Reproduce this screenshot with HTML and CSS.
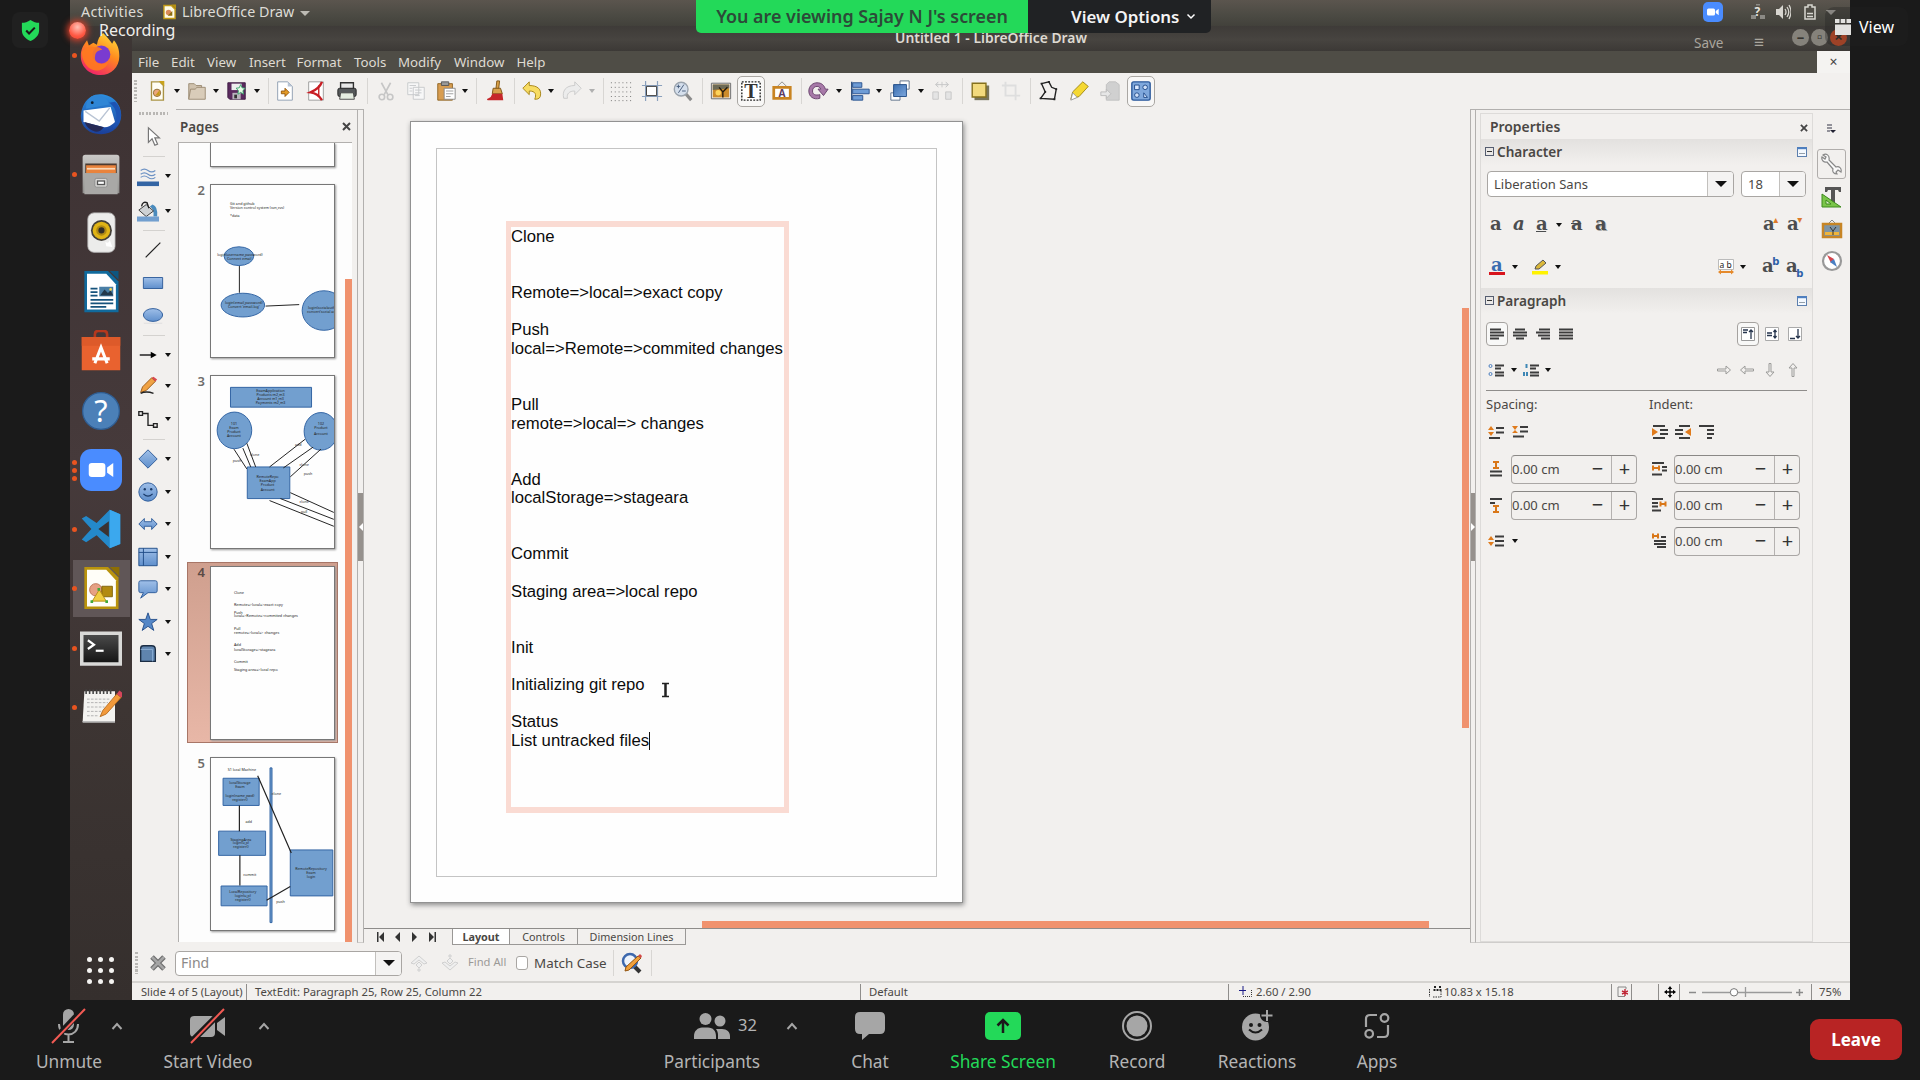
FILE: index.html
```html
<!DOCTYPE html>
<html lang="en">
<head>
<meta charset="utf-8">
<title>Screen share</title>
<link rel="stylesheet" href="styles.css">
</head>
<body>
<svg class="defs" aria-hidden="true">
  <defs>
    <linearGradient id="blue" x1="0" y1="0" x2="0" y2="1"><stop offset="0" stop-color="#9fbfe8"/><stop offset="1" stop-color="#5f8fcc"/></linearGradient>
    <linearGradient id="deep" x1="0" y1="0" x2="1" y2="1"><stop offset="0" stop-color="#3a6eb0"/><stop offset="1" stop-color="#7da7dd"/></linearGradient>
    <linearGradient id="fox" x1=".8" y1="0" x2=".3" y2="1"><stop offset="0" stop-color="#ffde3c"/><stop offset=".45" stop-color="#ff8a1e"/><stop offset="1" stop-color="#f0226a"/></linearGradient>
    <linearGradient id="bird" x1="0" y1="0" x2="0" y2="1"><stop offset="0" stop-color="#2c8fe0"/><stop offset="1" stop-color="#1b3f9a"/></linearGradient>
    <linearGradient id="steel" x1="0" y1="0" x2="0" y2="1"><stop offset="0" stop-color="#c9c8c6"/><stop offset="1" stop-color="#8f8e8c"/></linearGradient>
    <linearGradient id="term" x1="0" y1="0" x2="0" y2="1"><stop offset="0" stop-color="#4a4a4a"/><stop offset="1" stop-color="#161616"/></linearGradient>
  </defs>
  <symbol id="caret-up" viewBox="0 0 12 8"><path d="M1.500 7 6 2l4.500 5" fill="none" stroke="#a6a6a6" stroke-width="2"/></symbol>
  <symbol id="more" viewBox="0 0 10 10"><rect x=".5" y=".5" width="9" height="9" fill="#f4f9ff" stroke="#5c7fae"/><path d="M0 1.200h10" stroke="#4d7fc0" stroke-width="2"/><path d="M2.500 6.500h1m1 0h1m1 0h1" stroke="#345"/></symbol>
  <symbol id="minusbox" viewBox="0 0 9 9"><rect x=".5" y=".5" width="8" height="8" fill="none" stroke="#555d70"/><path d="M2 4.500h5" stroke="#333"/></symbol>
</svg>

<div class="screen">
  <div class="meeting">
    <aside class="rail rail-left">
      <div class="shield"><svg viewBox="0 0 20 22"><path d="M10 0c3 2 6 3 9 3v8c0 5-4 9-9 11-5-2-9-6-9-11V3c3 0 6-1 9-3z" fill="#23d959"/><path d="m5.500 11 3 3.200 6-6.200" fill="none" stroke="#1a1a1a" stroke-width="2.200"/></svg></div>
    </aside>

    <main class="share">
      <header class="topbar">
        <span class="activities">Activities</span>
        <svg class="appicon" viewBox="0 0 14 16"><path d="M1 1h8l4 4v10H1z" fill="#fffbe6" stroke="#c29a16" stroke-width="1.500"/><path d="M9 0h5v5z" fill="#b8920f"/><circle cx="6" cy="8.500" r="3" fill="#d98b5a"/><path d="m5 12 5-5v5z" fill="#8a6d10"/></svg>
        <span class="appname">LibreOffice Draw</span><i class="tri light"></i>
        <div class="tray">
          <svg width="20" height="20" viewBox="0 0 20 20"><rect width="20" height="20" rx="5" fill="#4a8cff"/><rect x="4" y="6.500" width="8" height="7" rx="1.500" fill="#fff"/><path d="m12.700 9 3-2.200v6.400l-3-2.200z" fill="#fff"/></svg>
          <svg width="16" height="16" viewBox="0 0 16 16"><path d="M1 11h5v4H1zm9 0h5v4h-5zM6 0h4v1.500H6z" fill="#8b8a85"/><text x="4.500" y="12" font-size="12" font-weight="700" fill="#e6e4df">?</text></svg>
          <svg width="16" height="16" viewBox="0 0 16 16"><path d="M1 5h3l4-4v14l-4-4H1z" fill="#d8d6d0"/><path d="M10 5q2 3 0 6m2-8q3.500 5 0 10m2-12q4 7 0 14" fill="none" stroke="#d8d6d0" stroke-width="1.300"/></svg>
          <svg width="12" height="16" viewBox="0 0 12 16"><path d="M1 3h3V1h4v2h3v12H1z" fill="none" stroke="#d8d6d0" stroke-width="1.500"/><path d="M3 9.500h6M3 12.500h6" stroke="#d8d6d0" stroke-width="1.600"/></svg>
          <i class="tri light"></i>
        </div>
      </header>

      <div class="desktop">
        <nav class="dock">
          <div class="app on1"><svg viewBox="0 0 48 48"><path d="M27 0c5 5 8 9 10 12l2-4c5 6 6 12 6 18 0 12-9 21-21 21S2 38 2 26C2 18 5 13 9 8l2 6 5-3 4 2c1-6 3-10 7-13z" fill="url(#fox)"/><circle cx="25" cy="24" r="10" fill="#7a3bd0"/><path d="M3 21c4-5 10-7 14-5 4-1 7 0 9 3-5 0-8 3-8 7-2 7 7 12 15 6-3 10-16 13-23 6-4-4-7-10-7-17z" fill="#ff7a1f" opacity=".9"/></svg></div>
          <div class="app"><svg viewBox="0 0 48 48"><path d="M13 4C24-3 46 4 47 24c1 13-9 23-23 23S0 38 1 25C2 16 6 8 13 4z" fill="url(#bird)"/><path d="M13 4c9-4 19 1 20 9L7 18q-1-8 6-14z" fill="#2f86d6"/><path d="M4 20l31-4 5 17q-6 6-12 6L4 33z" fill="#fff"/><path d="m6 21 16 11 12-15" fill="none" stroke="#b9c4d4" stroke-width="1.500"/><path d="M33 11c9 5 12 18 4 30 12-7 13-22 3-31z" fill="#1d54b4"/><path d="M5 33l22 6q-4 6-10 5Q9 42 5 33z" fill="#262a55"/><circle cx="14" cy="11" r="1.600" fill="#123"/></svg></div>
          <div class="app on1"><svg viewBox="0 0 48 48"><path d="M3 5q0-3 3-3h36q3 0 3 3v41H3z" fill="url(#steel)"/><path d="M6 12h36v11H6z" fill="#4c3b31"/><path d="M7 14h34v9H7z" fill="#e9833c"/><path d="M8 18h32" stroke="#fbd7b6" stroke-width="2"/><path d="M5 23h38v24H5z" fill="#a9a8a6"/><rect x="17" y="29" width="14" height="10" rx="2" fill="#d8d7d5" stroke="#888"/><rect x="20" y="32" width="8" height="4" fill="#fff" stroke="#555" stroke-width="1.500"/></svg></div>
          <div class="app"><svg viewBox="0 0 48 48"><rect x="9" y="1" width="31" height="45" rx="7" fill="#ececeb" stroke="#bbb"/><circle cx="24.500" cy="21" r="12" fill="#44403a"/><circle cx="24.500" cy="21" r="10" fill="#e0b416"/><circle cx="24.500" cy="21" r="6" fill="#b08a14"/><circle cx="24.500" cy="21" r="3.500" fill="#332f28"/><path d="M29 34q4 3 5-2l3 8-7-1z" fill="#fff"/></svg></div>
          <div class="app"><svg viewBox="0 0 48 48"><path d="M5 0h27l12 12v35H5z" fill="#116a9c"/><path d="M34 0h10v10z" fill="#0d5680"/><path d="M8 3h22l11 12v29H8z" fill="#fff"/><path d="M12 20h8M12 24h8M12 28h8M12 33h26M12 37h26M12 41h18" stroke="#16537c" stroke-width="2"/><rect x="22" y="18" width="16" height="11" fill="#4a7fa6"/><path d="m23 28 5-7 4 4 3-3 3 6z" fill="#22384a"/><circle cx="35" cy="21" r="1.500" fill="#fbd84c"/></svg></div>
          <div class="app"><svg viewBox="0 0 48 48"><path d="M17 10V5q0-4 4-4h6q4 0 4 4v5" fill="none" stroke="#b5381d" stroke-width="3"/><path d="M2 8h44v38H2z" fill="#e9622f"/><path d="M2 8h44v10H2z" fill="#dd5a2a"/><path d="m17 38 7-18 7 18M14 33h20" fill="none" stroke="#fff" stroke-width="3.500"/></svg></div>
          <div class="app"><svg viewBox="0 0 48 48"><circle cx="24" cy="24" r="21" fill="#4b80b8" stroke="#2f5d92" stroke-width="1.500"/><text x="24" y="37" text-anchor="middle" font-size="35" fill="#fff">?</text></svg></div>
          <div class="app on3"><svg viewBox="0 0 48 48"><rect width="48" height="48" rx="13" fill="#4a8cff"/><rect x="10" y="16" width="19" height="16" rx="3.500" fill="#fff"/><path d="m31 21 7-5v16l-7-5z" fill="#fff"/></svg></div>
          <div class="app on1"><svg viewBox="0 0 48 48"><path d="m34 2 12 5v34l-12 5-15-15-12 8-5-3 11-12L2 12l5-3 12 8z" fill="#2489ca"/><path d="M34 2v44l12-5V7z" fill="#3ba8ee"/><path d="M33 15v18L21 24z" fill="#3b3231"/></svg></div>
          <div class="app on1 current"><svg viewBox="0 0 48 48"><path d="M5 0h27l12 12v36H5z" fill="#b9930d"/><path d="M34 0h11v11z" fill="#8d6e04"/><path d="M8 3h22l11 12v30H8z" fill="#fffef8"/><circle cx="18" cy="26" r="7" fill="#e6a183" stroke="#b86b4c"/><path d="M25 22h12v12H25z" fill="#b28a10" stroke="#7b5f06"/><path d="m22 26 8 13H14z" fill="#f0cd42" stroke="#b48c0b"/><path d="M20 24h3v3h-3zM12 38h3v3h-3zM29 38h3v3h-3z" fill="#3faa3a"/></svg></div>
          <div class="app on1"><svg viewBox="0 0 48 48"><path d="M0 4h48v39H0z" fill="#d9d9d7"/><path d="M4 8h40v31H4z" fill="url(#term)"/><path d="m9 14 7 5-7 5" fill="none" stroke="#fff" stroke-width="2.500"/><path d="M18 26h9" stroke="#fff" stroke-width="2.500"/></svg></div>
          <div class="app on1"><svg viewBox="0 0 48 48"><path d="M5 6h35v35H3z" fill="#f4f3f0"/><path d="M3 41h37" stroke="#bbb" stroke-width="2"/><path d="M7 9V4m4 5V4m4 5V4m4 5V4m4 5V4m4 5V4m4 5V4m4 5V4" stroke="#444" stroke-width="1.800"/><path d="M8 15h26M8 19h24M8 24h20M8 29h16M8 34h12" stroke="#aaa" stroke-dasharray="3 1.500"/><path d="m23 35 3-7L42 9l5 4-17 19z" fill="#f29a3b" stroke="#b56a1d"/><path d="m42 9 3-4 5 4-3 4z" fill="#d5455b"/></svg></div>
          <div class="grid9"><b></b><b></b><b></b><b></b><b></b><b></b><b></b><b></b><b></b></div>
        </nav>

        <section class="window">
          <div class="titlebar"><span class="wintitle">Untitled 1 - LibreOffice Draw</span>
            <div class="winbtns"><span class="ghost">Save</span><span class="ghost burger">≡</span><i class="wb">–</i><i class="wb">▫</i><i class="wb close">×</i></div>
          </div>
          <div class="menubar">
            <div class="menus"><span>File</span><span>Edit</span><span>View</span><span>Insert</span><span>Format</span><span>Tools</span><span>Modify</span><span>Window</span><span>Help</span></div>
            <div class="closedoc">×</div>
          </div>

          <div class="toolbar">
            <i class="grip v"></i>
            <svg class="ic" viewBox="0 0 24 24"><path d="M6 2h9l4 4v16H6z" fill="#fffef4" stroke="#a99344" stroke-width="1.500"/><path d="M14 1h6v6z" fill="#c9a31c"/><circle cx="12" cy="14" r="4" fill="#eba77a" stroke="#8a6a30"/><path d="m10 17 5-6v6z" fill="#c59a18"/></svg><i class="tri"></i>
            <svg class="ic" viewBox="0 0 24 24"><path d="M3 21V4h6l2 2h6v3" fill="#cfc1ad" stroke="#9a8a72"/><path d="M5 10h5l2-2h9v13H3z" fill="#d9ccb9" stroke="#9a8a72"/></svg><i class="tri"></i>
            <svg class="ic" viewBox="0 0 24 24"><path d="M2 3h19v18H4l-2-2z" fill="#5b2a5f" stroke="#3c1a42"/><path d="M6 4h11v7H6z" fill="#eee"/><path d="M7 14h9v7H7z" fill="#b9b4bd"/><path d="M9 16h3v4H9z" fill="#333"/><path d="m16 5 1.500 3.500 3.500.5-2.500 2.500.5 4-3-2-3 2 .5-4L11 9l3.500-.5z" fill="#eafbe7" stroke="#35a06a"/></svg><i class="tri"></i>
            <i class="sep"></i>
            <svg class="ic" viewBox="0 0 24 24"><path d="M4 2h11l5 5v15H4z" fill="#fff" stroke="#8d9cb0"/><path d="M15 2v5h5z" fill="#b9c5d5"/><path d="M8 12h4V9l4.500 4.500L12 18v-3H8z" fill="#e39a25" stroke="#92540a"/></svg>
            <svg class="ic" viewBox="0 0 24 24"><path d="M4 2h16v20H4z" fill="#fff" stroke="#999"/><path d="M18.500 2Q16 9 6 13.500q8 1 12.500 8.500" fill="none" stroke="#c81e24" stroke-width="2.600"/><path d="M15 6v12" stroke="#c81e24" stroke-width="1.500"/></svg>
            <svg class="ic" viewBox="0 0 24 24"><path d="M5 3h14v7H5z" fill="#e8e8e8" stroke="#333" stroke-width="1.500"/><rect x="2" y="9" width="20" height="9" rx="2" fill="#55585a" stroke="#222"/><path d="M5 14h14l1 7H4z" fill="#e4ece0" stroke="#444"/></svg>
            <i class="sep"></i>
            <svg class="ic" viewBox="0 0 24 24" fill="none" stroke="#c6c6c6"><path d="m7 3 7 13M17 3l-7 13" stroke-width="1.800"/><circle cx="7.500" cy="18.500" r="3" stroke-width="1.800"/><circle cx="16.500" cy="18.500" r="3" stroke-width="1.800"/></svg>
            <svg class="ic" viewBox="0 0 24 24" fill="#f7f7f7" stroke="#c6c8cb"><path d="M3 3h12v13H3zM9 8h12v13H9z"/><path d="M5 6h7M5 9h3M5 12h3M11 11h7m-7 3h7m-7 3h5"/></svg>
            <svg class="ic" viewBox="0 0 24 24"><path d="M3 4h16v18H3z" fill="#d89d50" stroke="#8e6220"/><path d="M7 2h8v4H7z" fill="#999" stroke="#555"/><path d="M10 9h12v12H10z" fill="#fff" stroke="#888"/><path d="M12 12h8m-8 3h8m-8 3h5" stroke="#999"/></svg><i class="tri"></i>
            <i class="sep"></i>
            <svg class="ic" viewBox="0 0 24 24"><path d="M14 1h3l-1 9h-3z" fill="#dba24a" stroke="#7d5212"/><path d="M10 9h8l2 6H9z" fill="#d9a24d" stroke="#7d5212"/><path d="M9 15h11l1 7H4q-2-1 1-2 3-1 4-5z" fill="#c6272b"/></svg>
            <i class="sep"></i>
            <svg class="ic" viewBox="0 0 24 24"><path d="m2 9 7-7v4c9 0 14 4 12 12-1 3-4 3-6 3 2-5 1-9-6-9v4z" fill="#f7dc62" stroke="#a58214"/></svg><i class="tri"></i>
            <svg class="ic" viewBox="0 0 24 24"><path d="m22 9-7-7v4C5 6 1 12 3 20h4c-1-5 2-8 8-8v4z" fill="#ececec" stroke="#c9c9c9"/></svg><i class="tri dim"></i>
            <i class="sep"></i>
            <svg class="ic" viewBox="0 0 24 24"><path d="M1 3h22M1 8h22M1 13h22M1 18h22M1 22.500h22" stroke="#666" stroke-width="1" stroke-dasharray="1 3.200"/></svg>
            <svg class="ic" viewBox="0 0 24 24"><path d="M1 6h22M1 18h22M5 1v22M18 1v22" stroke="#8aa0bd" stroke-width="1.300"/><path d="M6 7h11v10H6z" fill="#fff" stroke="#333"/></svg>
            <svg class="ic" viewBox="0 0 24 24"><path d="m15 15 6 7" stroke="#8b8b8b" stroke-width="3.500"/><circle cx="10" cy="10" r="7.500" fill="#d5dfec" stroke="#9aa3ad" stroke-width="1.500"/><path d="m7 14 6-9M5 7h4m-2-2v4m4 3h4" stroke="#445a78"/></svg>
            <i class="sep"></i>
            <svg class="ic" viewBox="0 0 24 24"><path d="M1.500 3.500h21v17h-21z" fill="#eee" stroke="#666"/><path d="M3 5h18v14H3z" fill="#cc8b2a"/><path d="M3 5h18v4l-18 2z" fill="#6d6a55"/><circle cx="9" cy="14" r="3" fill="#ffd45a"/><path d="M14 19v-6l-4-5m4 5 5-5" stroke="#221a0e" stroke-width="1.500" fill="none"/></svg>
            <div class="btn"><svg class="ic" viewBox="0 0 24 24"><path d="M2 2h20v20H2z" fill="#fff" stroke="#222" stroke-dasharray="2 1.500" stroke-width="1.500"/><text x="12" y="19.500" text-anchor="middle" font-family="Liberation Serif, serif" font-weight="700" font-size="22" fill="#333">T</text></svg></div>
            <svg class="ic" viewBox="0 0 24 24"><path d="m6 8 6-6 6 6" fill="none" stroke="#888"/><path d="M3 8h18v12H3z" fill="#fff" stroke="#c98422" stroke-width="3"/><text x="12" y="18" text-anchor="middle" font-weight="700" font-size="11" fill="#5a3a63">A</text></svg>
            <i class="sep"></i>
            <svg class="ic" viewBox="0 0 24 24"><path d="M14 20c-7 2-12-2-12-8s5-9 9-9c5 0 8 3 9 7h3l-5 7-6-7h3c-1-2-2-3-4-3-3 0-5 2-5 5 0 4 3 5 8 4z" fill="#a779a8" stroke="#66406a"/></svg><i class="tri"></i>
            <svg class="ic" viewBox="0 0 24 24"><path d="M3 2v20" stroke="#274a7a" stroke-width="1.500"/><path d="M4 3h10v5H4zm0 7h18v5H4zm0 7h11v5H4z" fill="#6e9cd6" stroke="#27508c"/></svg><i class="tri"></i>
            <svg class="ic" viewBox="0 0 24 24"><path d="M12 1h10v9H12zM2 14h10v8H2z" fill="#fff" stroke="#5c6f88"/><path d="M5 5h14v13H5z" fill="url(#deep)" stroke="#1f4a84"/></svg><i class="tri"></i>
            <svg class="ic" viewBox="0 0 24 24" fill="#e4e4e4" stroke="#c6c6c6"><path d="M2 13h6v8H2zM16 13h6v8h-6zM5 5h14M8 2 5 5l3 3m8-6 3 3-3 3M12 2v6"/></svg>
            <i class="sep"></i>
            <svg class="ic" viewBox="0 0 24 24"><path d="M6 6h16v16H6z" fill="#77755c"/><path d="M3.500 3.500h15v15h-15z" fill="#f2da7d" stroke="#85701d" stroke-width="1.500"/></svg>
            <svg class="ic" viewBox="0 0 24 24" fill="none" stroke="#dedede" stroke-width="2"><path d="M6 2v15h16M2 6h15v16"/></svg>
            <i class="sep"></i>
            <svg class="ic" viewBox="0 0 24 24"><path d="m5 4 8-2 3 6 5 2-2 11-15-1 5-7z" fill="none" stroke="#222" stroke-width="1.500"/><path d="M4 3h2v2H4zm8-2h2v2h-2zm8 8h2v2h-2zm-2 11h2v2h-2zM3 19h2v2H3zm5-7h2v2H8z" fill="#222"/></svg>
            <svg class="ic" viewBox="0 0 24 24"><path d="m2 21 2-8L15 2l6 5-10 11z" fill="#f5d832" stroke="#a08711"/><path d="m2 22 2-8 5 5z" fill="#fff" stroke="#999"/></svg>
            <svg class="ic" viewBox="0 0 24 24"><path d="M8 5l3-3h7l4 3v17H8z" fill="#d0d0d0" stroke="#c0c0c0"/><path d="M2 13h6v-3l5 5-5 5v-3H2z" fill="#e6e6e6" stroke="#bbb"/></svg>
            <div class="btn"><svg class="ic" viewBox="0 0 24 24"><rect x="2" y="2" width="20" height="20" rx="2" fill="#7fa8dc" stroke="#2c5a9c" stroke-width="1.500"/><path d="M5 5.500h5v5H5zM15 19v-5l4 5z" fill="#dceaff" stroke="#1c4787"/><circle cx="16.500" cy="8" r="2.500" fill="#cfe0f8" stroke="#1c4787"/><circle cx="7.500" cy="16.500" r="2.500" fill="#cfe0f8" stroke="#1c4787"/></svg></div>
          </div>

          <div class="work">
            <div class="drawbar">
              <i class="grip h"></i>
              <div class="one"><svg class="ic" viewBox="0 0 24 24"><path d="M7 3v16l4-4 3 7 3-1-3-7h5z" fill="#fff" stroke="#777" stroke-width="1.300"/></svg></div>
              <i class="rule"></i>
              <div class="two"><svg class="ic" viewBox="0 0 24 24"><path d="M4 6q4-3 8 0t8 0M4 10q4-3 8 0t8 0M4 13.500q4-3 8 0t8 0" fill="none" stroke="#6d92c4" stroke-width="1.300"/><path d="M0 18h24v5H0z" fill="#3465a4"/></svg><i class="tri"></i></div>
              <div class="two"><svg class="ic" viewBox="0 0 24 24"><path d="M17 5q6 2 5 13l-4 0q1-8-4-11z" fill="#4a8bbd"/><path d="m2 11 8-6 8 7-8 6z" fill="#cfd2d4" stroke="#333"/><path d="M5 7q1-6 6-4l2 6" fill="none" stroke="#222" stroke-width="1.500"/><path d="M0 18h24v5.500H0z" fill="#729fcf"/></svg><i class="tri"></i></div>
              <i class="rule"></i>
              <div class="one"><svg class="ic" viewBox="0 0 24 24"><path d="M4 20 20 4" stroke="#222" stroke-width="1.300"/></svg></div>
              <div class="one"><svg class="ic" viewBox="0 0 24 24"><path d="M1.500 6h21v12h-21z" fill="url(#blue)" stroke="#2c5a98"/></svg></div>
              <div class="one"><svg class="ic" viewBox="0 0 24 24"><ellipse cx="12" cy="12" rx="10.500" ry="7" fill="url(#blue)" stroke="#2c5a98"/><path d="M2 21h20" stroke="#ddd"/></svg></div>
              <i class="rule"></i>
              <div class="two"><svg class="ic" viewBox="0 0 24 24"><path d="M3 12h14" stroke="#111" stroke-width="1.500"/><path d="m15 8.500 6.500 3.500-6.500 3.500z"/></svg><i class="tri"></i></div>
              <div class="two"><svg class="ic" viewBox="0 0 24 24"><path d="m4 19 2-6L16 3l4 4L10 17z" fill="#f0a244" stroke="#975512"/><path d="m16 3 2-1 4 3-2 2z" fill="#d9494f"/><path d="M4 20q6-3 14 0" fill="none" stroke="#222" stroke-width="1.500"/></svg><i class="tri"></i></div>
              <div class="two"><svg class="ic" viewBox="0 0 24 24" fill="none" stroke="#222" stroke-width="1.500"><path d="M2 4h4v4H2zM18 17h4v4h-4zM6 6h6v13h6"/></svg><i class="tri"></i></div>
              <i class="rule"></i>
              <div class="two"><svg class="ic" viewBox="0 0 24 24"><path d="m12 2 10 10-10 10L2 12z" fill="url(#blue)" stroke="#2c5a98"/></svg><i class="tri"></i></div>
              <div class="two"><svg class="ic" viewBox="0 0 24 24"><circle cx="12" cy="12" r="10" fill="url(#blue)" stroke="#2c5a98"/><circle cx="8.500" cy="9" r="1.300" fill="#1b3b6a"/><circle cx="15.500" cy="9" r="1.300" fill="#1b3b6a"/><path d="M7 14q5 5 10 0" fill="none" stroke="#1b3b6a" stroke-width="1.300"/></svg><i class="tri"></i></div>
              <div class="two"><svg class="ic" viewBox="0 0 24 24"><path d="m2 12 6-6v3.500h8V6l6 6-6 6v-3.500H8V18z" fill="url(#blue)" stroke="#2c5a98"/></svg><i class="tri"></i></div>
              <div class="two"><svg class="ic" viewBox="0 0 24 24"><path d="M2 2.500h20v19H2zM7 2.500v19M2 7h20" fill="url(#blue)" stroke="#1e4a86"/></svg><i class="tri"></i></div>
              <div class="two"><svg class="ic" viewBox="0 0 24 24"><path d="M4 3h16q2 0 2 2v9q0 2-2 2h-8l-8 6 3-6H4q-2 0-2-2V5q0-2 2-2z" fill="url(#blue)" stroke="#2c5a98"/></svg><i class="tri"></i></div>
              <div class="two"><svg class="ic" viewBox="0 0 24 24"><path d="m12 2 2.500 7.200H22l-6 4.500 2.300 7.500L12 16.700l-6.300 4.500L8 13.700 2 9.200h7.500z" fill="#5587c7" stroke="#244e8a"/></svg><i class="tri"></i></div>
              <div class="two"><svg class="ic" viewBox="0 0 24 24"><path d="M4 6q0-3 3-3h9q4 0 4 4v13H4z" fill="#5f84ae" stroke="#1c2e45" stroke-width="1.500"/><path d="M4 7h13v13" fill="none" stroke="#8db0d6"/></svg><i class="tri"></i></div>
            </div>

            <div class="pages">
              <div class="phead"><span>Pages</span><svg width="9" height="9" viewBox="0 0 9 9"><path d="m1 1 7 7M8 1 1 8" stroke="#444" stroke-width="2"/></svg></div>
              <div class="plist">
                <div class="thumbs">
                  <div class="slot first"><span></span><svg class="thumb" viewBox="0 0 124 24"></svg></div>
                  <div class="slot"><span>2</span>
                    <svg class="thumb" viewBox="0 0 124 174"><g fill="#729fcf" stroke="#3465a4"><ellipse cx="28" cy="72" rx="15" ry="9.500"/><ellipse cx="32" cy="121.500" rx="22" ry="12"/><ellipse cx="114" cy="127" rx="22" ry="20"/></g><path d="M28.500 82v27M55 122.500l34-1.500" stroke="#222"/><g font-size="3.700"><text x="19" y="20">Git and github</text><text x="19" y="24">Version control system (svn,cvs)</text><text x="19" y="32">*data</text><text x="6" y="71.500">login(username,password)</text><text x="16" y="76">Connect email</text><text x="14" y="120.500">login(email,password)</text><text x="17" y="124">Convert 'email.log'</text><text x="98" y="125.500">login(socialauth)</text><text x="97" y="129.500">convert'social au</text></g></svg></div>
                  <div class="slot"><span>3</span>
                    <svg class="thumb" viewBox="0 0 124 174"><g fill="#729fcf" stroke="#3465a4"><path d="M19.500 11.500h82v20h-82zM36.500 92h43v32h-43z"/><ellipse cx="23.500" cy="55" rx="17.500" ry="18.500"/><ellipse cx="111" cy="56" rx="17" ry="19"/></g><path d="m23 74 13 20M32 73l8 19M36 68l9 24M95 64 59 92m44-20L73 93m38-19-31 28M80 118l44 20M70 124l54 21M59 126l65 26" stroke="#222"/><g font-size="3.700" text-anchor="middle"><text x="60" y="16.500">ExamApplication</text><text x="60" y="20.500">Products m2,m3</text><text x="60" y="24.500">Account m1,m3</text><text x="60" y="28.500">Payments m2,m3</text><text x="23" y="50">101</text><text x="23" y="54">Exam</text><text x="23" y="58">Product</text><text x="23" y="62">Account</text><text x="111" y="50">102</text><text x="111" y="54">Product</text><text x="111" y="60">Account</text><text x="57" y="103">RemoteRepo</text><text x="57" y="107.500">ExamApp</text><text x="57" y="111.500">Product</text><text x="57" y="116">Account</text><text x="26" y="86.500">push</text><text x="44" y="81">clone</text><text x="88" y="71">add</text><text x="94" y="91">clone</text><text x="98" y="100">push</text><text x="94" y="128">clone</text><text x="94" y="139">pull</text></g></svg></div>
                  <div class="slot sel"><span>4</span>
                    <svg class="thumb" viewBox="0 0 124 174"><g font-size="3.800"><text x="23" y="27">Clone</text><text x="23" y="39">Remote=&gt;local=&gt;exact copy</text><text x="23" y="47.500">Push</text><text x="23" y="51">local=&gt;Remote=&gt;commited changes</text><text x="23" y="64">Pull</text><text x="23" y="68">remote=&gt;local=&gt; changes</text><text x="23" y="80">Add</text><text x="23" y="85">localStorage=&gt;stageara</text><text x="23" y="97">Commit</text><text x="23" y="105">Staging area=&gt;local repo</text></g></svg></div>
                  <div class="slot"><span>5</span>
                    <svg class="thumb" viewBox="0 0 124 174"><g fill="#729fcf" stroke="#3465a4"><path d="M12 20.500h36.500v27.500H12zM7.500 74h47.500v24.500H7.500zM10 129.500h46.500v20H10zM80 93h43v46.500H80zM59.500 10h2v156.500h-2z"/></g><path d="M28.500 48v26M29 98.500V129M47 18l34 78M56 144l24-14" stroke="#222" stroke-width="1.200"/><g font-size="3.700" text-anchor="middle"><text x="31" y="13.500">S1 local Machine</text><text x="29" y="26.500">localStorage</text><text x="29" y="30.500">Exam</text><text x="29" y="39">login(name,pwd)</text><text x="29" y="43.500">register()</text><text x="38" y="65.500">add</text><text x="30" y="83.500">StagingArea</text><text x="30" y="87.500">login(u,p)</text><text x="30" y="91.500">register()</text><text x="39" y="119.500">commit</text><text x="32" y="136.500">LocalRepository</text><text x="32" y="140.500">login(u,p)</text><text x="32" y="144.500">register()</text><text x="66" y="37">clone</text><text x="70" y="147">push</text><text x="101" y="113">RemoteRepository</text><text x="101" y="117.500">Exam</text><text x="101" y="121.500">login</text></g></svg></div>
                </div>
                <div class="pscroll"></div>
              </div>
            </div>
            <div class="splitter left"><svg viewBox="0 0 5 68"><path d="M5 30v8l-4-4z"/></svg></div>

            <div class="editor">
              <div class="canvas">
                <div class="sheet"><div class="margins">
                  <div class="frame"><pre>Clone


Remote=&gt;local=&gt;exact copy

Push
local=&gt;Remote=&gt;commited changes


Pull
remote=&gt;local=&gt; changes


Add
localStorage=&gt;stageara


Commit

Staging area=&gt;local repo


Init

Initializing git repo

Status
List untracked files<i class="caret"></i></pre></div>
                  <svg class="ibeam" viewBox="0 0 9 16"><path d="M1 1.500h3v13H1M8 1.500H5v13h3" fill="#fff" stroke="#222" stroke-width="1.500"/></svg>
                </div></div>
                <div class="vscroll"></div>
              </div>
              <div class="hscroll"></div>
              <div class="tabs">
                <svg class="navs" viewBox="0 0 64 14"><path d="M3 2h1.500v10H3zM10 2v10L5 7zM26 2v10l-5-5zM38 2v10l5-5zM55 2v10l5-5zM60.500 2H62v10h-1.500z" fill="#333"/></svg>
                <span class="tab active">Layout</span><span class="tab t2">Controls</span><span class="tab t3">Dimension Lines</span>
              </div>
            </div>

            <div class="splitter right"><svg viewBox="0 0 4 68"><path d="M0 30v8l4-4z"/></svg></div>

            <div class="sidebar">
              <div class="props">
                <div class="ptitle"><span>Properties</span><svg width="8" height="8" viewBox="0 0 9 9"><path d="m1 1 7 7M8 1 1 8" stroke="#444" stroke-width="2"/></svg></div>
                <div class="phd"><svg width="9" height="9"><use href="#minusbox"/></svg><span>Character</span><svg width="10" height="10"><use href="#more"/></svg></div>
                <div class="fonts"><div class="combo f1"><span>Liberation Sans</span><b><i class="tri big"></i></b></div><div class="combo f2"><span>18</span><b><i class="tri big"></i></b></div></div>
                <div class="g chars">
                  <span class="ga">a</span><span class="ga it">a</span><span class="ga un">a</span><i class="tri"></i><span class="ga st">a</span><span class="ga sh">a</span>
                  <span class="ga">a<sup class="or">▴</sup></span><span class="ga">a<sup class="or">▾</sup></span>
                </div>
                <div class="g colors">
                  <span class="ga fc">a</span><i class="tri"></i>
                  <svg viewBox="0 0 16 16"><path d="m3 10 1-3 7-6 3 3-7 6z" fill="#dbb83a" stroke="#555"/><path d="M0 12h16v3.500H0z" fill="#fff200"/></svg><i class="tri"></i>
                  <svg viewBox="0 0 16 16"><path d="M.5.500h15v10H.5z" fill="#fff" stroke="#bbb"/><text x="1.500" y="8.500" font-size="8.500" fill="#222">a b</text><path d="m0 13 3-2.500v1.500h10v-1.500l3 2.500-3 2.500V14H3v1.500z" fill="#e58a2c"/></svg><i class="tri"></i>
                  <span class="ga">a<sup class="bl">b</sup></span><span class="ga">a<sub class="bl">b</sub></span>
                </div>
                <div class="phd"><svg width="9" height="9"><use href="#minusbox"/></svg><span>Paragraph</span><svg width="10" height="10"><use href="#more"/></svg></div>
                <div class="g aligns">
                  <div class="sbtn"><svg viewBox="0 0 16 16"><path d="M1 3.500h11M1 6.500h14M1 9.500h14M1 12.500h9" stroke="#3c3c3c" stroke-width="2"/></svg></div>
                  <svg viewBox="0 0 16 16"><path d="M3 3.500h10M1 6.500h14M1 9.500h14M4 12.500h8" stroke="#3c3c3c" stroke-width="2"/></svg>
                  <svg viewBox="0 0 16 16"><path d="M4 3.500h11M1 6.500h14M3 9.500h12M6 12.500h9" stroke="#3c3c3c" stroke-width="2"/></svg>
                  <svg viewBox="0 0 16 16"><path d="M1 3.500h14M1 6.500h14M1 9.500h14M1 12.500h14" stroke="#3c3c3c" stroke-width="2"/></svg>
                  <div class="sbtn"><svg viewBox="0 0 16 16"><path d="M1.500 1.500h13v13h-13z" fill="#fff" stroke="#999"/><path d="M3 4h5M3 6.500h4M11 13V4M9 6l2-2 2 2" fill="none" stroke="#26354d" stroke-width="1.300"/></svg></div>
                  <svg viewBox="0 0 16 16"><path d="M1.500 1.500h13v13h-13z" fill="#fff" stroke="#aaa"/><path d="M3 7h5M3 9.500h5M11 12V4M9.500 6 11 4l1.500 2m-3 4 1.500 2 1.500-2" fill="none" stroke="#26354d" stroke-width="1.300"/></svg>
                  <svg viewBox="0 0 16 16"><path d="M1.500 1.500h13v13h-13z" fill="#fff" stroke="#aaa"/><path d="M3 12.500h5M11 3v9M9 10l2 2 2-2" fill="none" stroke="#26354d" stroke-width="1.300"/></svg>
                </div>
                <div class="g lists">
                  <svg viewBox="0 0 16 16"><circle cx="2.500" cy="4" r="1.500" fill="none" stroke="#4d7fc0"/><circle cx="2.500" cy="12" r="1.500" fill="none" stroke="#4d7fc0"/><path d="M7 3.500h9M7 6.500h6M7 10.500h9M7 13.500h9" stroke="#3c3c3c" stroke-width="1.800"/></svg><i class="tri"></i>
                  <svg viewBox="0 0 16 16"><path d="M3.500 2v4M1 10v4m3-4v4" stroke="#3f87b5" stroke-width="2"/><path d="M7 3.500h9M7 6.500h6M7 10.500h9M7 13.500h9" stroke="#3c3c3c" stroke-width="1.800"/></svg><i class="tri"></i>
                  <svg viewBox="0 0 16 16" class="arw"><path d="M1.500 7h8.500V4l4.500 4-4.500 4V9H1.500z"/></svg>
                  <svg viewBox="0 0 16 16" class="arw"><path d="M14.500 7H6V4L1.500 8 6 12V9h8.500z"/></svg>
                  <svg viewBox="0 0 16 16" class="arw"><path d="M7 1.500V10H4l4 4.500 4-4.500H9V1.500z"/></svg>
                  <svg viewBox="0 0 16 16" class="arw"><path d="M7 14.500V6H4l4-4.500L12 6H9v8.500z"/></svg>
                </div>
                <div class="hr"></div>
                <div class="labels"><span>Spacing:</span><span>Indent:</span></div>
                <div class="g sicons">
                  <svg viewBox="0 0 16 16"><path d="M3 2l3 4H0zM3 12l3-4H0z" fill="#e07b1c"/><path d="M8 4h8M8 8.500h8M1 14h11" stroke="#3c3c3c" stroke-width="2"/></svg>
                  <svg viewBox="0 0 16 16"><path d="M0 2h6L3 6zM0 9h6L3 6z" fill="#e07b1c"/><path d="M8 3h8M8 7.500h8M1 12.500h11" stroke="#3c3c3c" stroke-width="2"/></svg>
                  <svg viewBox="0 0 16 16"><path d="m0 4 6 4-6 4z" fill="#e07b1c"/><path d="M1 2h12M8 6h8M8 10h8M1 14h12" stroke="#3c3c3c" stroke-width="2"/></svg>
                  <svg viewBox="0 0 16 16"><path d="m16 4-6 4 6 4z" fill="#e07b1c"/><path d="M4 2h11M0 6h8M0 10h8M4 14h11" stroke="#3c3c3c" stroke-width="2"/></svg>
                  <svg viewBox="0 0 16 16"><path d="M0 2h15M8 6h7M8 10h7M8 14h5" stroke="#3c3c3c" stroke-width="2"/></svg>
                </div>
                <div class="spins">
                  <svg viewBox="0 0 16 16"><path d="M5 1h6M8 1v6M5 7h6" stroke="#d97718" stroke-width="2"/><path d="M2 10.500h12M2 14.500h12" stroke="#3c3c3c" stroke-width="2"/></svg><div class="spin"><span>0.00 cm</span><b>−</b><b>+</b></div>
                  <svg viewBox="0 0 16 16"><path d="M1 7h8M2 4.500v5M8 4.500v5" stroke="#d97718" stroke-width="2"/><path d="M1 2h12M11 6h5M11 9.500h5M1 13.500h10" stroke="#3c3c3c" stroke-width="2"/></svg><div class="spin"><span>0.00 cm</span><b>−</b><b>+</b></div>
                  <svg viewBox="0 0 16 16"><path d="M5 9h6M8 9v6M5 15h6" stroke="#d97718" stroke-width="2"/><path d="M2 2h12M2 6h5" stroke="#3c3c3c" stroke-width="2"/></svg><div class="spin"><span>0.00 cm</span><b>−</b><b>+</b></div>
                  <svg viewBox="0 0 16 16"><path d="M9 7h6M9.500 4.500v5M14.500 4.500v5" stroke="#d97718" stroke-width="2"/><path d="M1 2h11M1 6h6M1 9.500h6M1 13.500h9" stroke="#3c3c3c" stroke-width="2"/></svg><div class="spin"><span>0.00 cm</span><b>−</b><b>+</b></div>
                  <svg viewBox="0 0 16 16"><path d="M3 3 6 7H0zM3 13l3-4H0z" fill="#e07b1c"/><path d="M7 3.500h9M7 8h9M7 12.500h9" stroke="#3c3c3c" stroke-width="2"/></svg><div class="ls"><i class="tri"></i></div>
                  <svg viewBox="0 0 16 16"><path d="M1 3h7M2 .500v5M7 .500v5" stroke="#d97718" stroke-width="2"/><path d="M10 4h5M3 8h12M3 11h12M6 14h9" stroke="#3c3c3c" stroke-width="1.800"/></svg><div class="spin"><span>0.00 cm</span><b>−</b><b>+</b></div>
                </div>
              </div>
              <div class="decks">
                <svg class="m" viewBox="0 0 9 9"><path d="M0 1h5M0 4h5M0 7h3" stroke="#334"/><path d="M3 6h6L6 9z" fill="#223"/></svg>
                <div class="deckon"><svg viewBox="0 0 22 22"><path d="M2 2c3-2 7 0 6 5l7 7c3-1 6 1 5 5l-3-2-2 2 1 2c-3 0-5-2-4-5L6 9C3 10 0 7 1 4l3 2 1-2z" fill="#fafafa" stroke="#888" stroke-width="1.200"/></svg></div>
                <svg viewBox="0 0 22 22"><path d="M4 1h16v5h-2l-1-2h-3v14h-4V4H7L6 6H4z" fill="#555"/><path d="m1 8 19 13H1z" fill="#7ac549" stroke="#3c8a1c"/><path d="m5 14 5 4H5z" fill="#dff2ce" stroke="#3c8a1c"/></svg>
                <svg viewBox="0 0 22 22"><path d="m7 6 4-4 4 4" fill="none" stroke="#888"/><path d="M2 6h18v13H2z" fill="#7e94a5" stroke="#c78525" stroke-width="2.500"/><path d="M4 14h14v3H4z" fill="#f0b53b"/><path d="M12 17v-4l-3-4m3 4 3-4" stroke="#333" fill="none"/></svg>
                <svg viewBox="0 0 22 22"><circle cx="11" cy="11" r="9" fill="#fff" stroke="#999" stroke-width="2.200"/><path d="m6 5 7 4-3 4z" fill="#d6454c"/><path d="m16 17-7-5 4-3z" fill="#4a7fc2"/></svg>
              </div>
            </div>
          </div>

          <div class="findbar">
            <i class="grip v"></i>
            <svg class="fx" viewBox="0 0 16 16"><path d="m2 2 12 12M14 2 2 14" stroke="#6e6e6e" stroke-width="5"/><path d="m2 2 12 12M14 2 2 14" stroke="#a5a5a5" stroke-width="2.500"/></svg>
            <div class="combo find"><span>Find</span><b><i class="tri big"></i></b></div>
            <svg viewBox="0 0 18 18" class="fa"><path d="m1 9 8-7 8 7-3 1-5-4-5 4zM9 8l3 3-3 3-3-3zM8 15h2v2H8z"/></svg>
            <svg viewBox="0 0 18 18" class="fa"><path d="m1 9 8 7 8-7-3-1-5 4-5-4zM9 10l3-3-3-3-3 3zM8 1h2v2H8z"/></svg>
            <span class="fall">Find All</span><i class="check"></i><span class="mc">Match Case</span><i class="sep"></i>
            <svg class="fr" viewBox="0 0 22 22"><path d="m14 14 6 6" stroke="#333" stroke-width="4"/><circle cx="10" cy="9" r="7" fill="#eef4fc" stroke="#3d68ad" stroke-width="2.500"/><path d="m5 19 1-4L18 4l3 2L9 18z" fill="#f0a03c" stroke="#93540f"/><path d="m18 4 2-2 2 2-1 2z" fill="#d34848"/></svg><i class="sep"></i>
          </div>

          <footer class="status">
            <span class="s1">Slide 4 of 5 (Layout)</span><span class="s2">TextEdit: Paragraph 25, Row 25, Column 22</span><span class="s3">Default</span>
            <span class="s4"><svg width="13" height="12" viewBox="0 0 13 12"><path d="M0 4.500h7M4 0v9" stroke="#1b1b86"/><path d="M4 10.500h8.500V4" fill="none" stroke="#333" stroke-dasharray="1 1"/></svg>2.60 / 2.90</span>
            <span class="s5"><svg width="14" height="12" viewBox="0 0 14 12"><path d="M1.500 3v8M5 11h8V4" fill="none" stroke="#333" stroke-dasharray="1.500 1"/><path d="M5.500 4h8M6 1h2m3 0h2" stroke="#222" stroke-width="2" stroke-dasharray="2 1"/></svg>10.83 x 15.18</span>
            <span class="s6"><svg width="11" height="12" viewBox="0 0 11 12"><path d="M8 10.500H1V1h8v2" fill="none" stroke="#888"/><path d="M8 3v7M5 5l6 3M5 8l6-3" stroke="#c02636" stroke-width="1.400"/></svg></span>
            <span class="s7"></span>
            <span class="s8"><svg width="12" height="12" viewBox="0 0 12 12"><path d="M6 0 8.200 3H6.700v2.300H9V3.800L12 6 9 8.200V6.700H6.700V9h1.500L6 12 3.800 9h1.500V6.700H3v1.500L0 6l3-2.200v1.500h2.300V3H3.800z"/></svg></span>
            <span class="s9"><svg width="116" height="12" viewBox="0 0 116 12"><path d="M1 6.500h7M108 6.500h7m-3.500-3.500v7" stroke="#8a8a8a" stroke-width="1.500"/><path d="M14 6.500h90M57.500 1v10" stroke="#9a9a9a" stroke-width="1.300"/><circle cx="46" cy="6.300" r="3.700" fill="#fff" stroke="#777"/></svg></span>
            <span class="s10">75%</span>
          </footer>
        </section>
      </div>

      <div class="recording"><i></i>Recording</div>
      <div class="banner"><span class="viewing">You are viewing Sajay N J's screen</span><span class="opts"><span>View Options</span><svg width="10" height="7" viewBox="0 0 9 7"><path d="m1 1.500 3.500 3.500L8 1.500" fill="none" stroke="#fff" stroke-width="1.500"/></svg></span></div>
      <div class="viewbtn"><svg width="16" height="16" viewBox="0 0 16 16" fill="#e2e2e0"><path d="M0 0h4.500v4H0zm5.700 0h4.500v4H5.700zm5.800 0H16v4h-4.500zM0 5.500h16V16H0z"/></svg><span>View</span></div>
    </main>
    <aside class="rail"></aside>
  </div>

  <div class="controls">
    <div class="ctl c1"><div class="cic"><svg width="36" height="36" viewBox="0 0 36 36"><rect x="12" y="1" width="11" height="21" rx="5.500" fill="#a6a6a6"/><path d="M8 16c0 14 19 14 19 0M17.500 26v7M12 34h11" fill="none" stroke="#a6a6a6" stroke-width="2"/><path d="M1 34 33 0" stroke="#1a1a1a" stroke-width="6"/><path d="M1 35 34 1" stroke="#f25a54" stroke-width="2"/></svg></div><span>Unmute</span></div>
    <svg class="up" width="12" height="8"><use href="#caret-up"/></svg>
    <div class="ctl c2"><div class="cic"><svg width="38" height="36" viewBox="0 0 38 36"><rect x="1" y="8" width="25" height="21" rx="4" fill="#a6a6a6"/><path d="M28 15l8-6v19l-8-6z" fill="#a6a6a6"/><path d="M2 34 35 1" stroke="#1a1a1a" stroke-width="6"/><path d="M2 35 35 1" stroke="#f25a54" stroke-width="2"/></svg></div><span>Start Video</span></div>
    <svg class="up" width="12" height="8"><use href="#caret-up"/></svg>
    <div class="ctl c3"><div class="cic"><svg width="36" height="28" viewBox="0 0 36 28" fill="#a6a6a6"><circle cx="11.500" cy="7" r="6"/><circle cx="26" cy="9" r="5.500"/><path d="M0 27v-3c0-5 4-8.500 8-8.500h6c5 0 8 3.500 8 8.500v3zM24 27v-4c0-2-.5-4-2-6h6c5 0 8 3 8 7v3z"/></svg><em>32</em></div><span>Participants</span></div>
    <svg class="up" width="12" height="8"><use href="#caret-up"/></svg>
    <div class="ctl c4"><div class="cic"><svg width="30" height="28" viewBox="0 0 30 28"><path d="M5 0h20q5 0 5 5v12q0 5-5 5H14l-7 6v-6H5q-5 0-5-5V5q0-5 5-5z" fill="#a6a6a6"/></svg></div><span>Chat</span></div>
    <div class="ctl c5"><div class="cic"><svg width="36" height="28" viewBox="0 0 36 28"><rect width="36" height="28" rx="5" fill="#23d959"/><path d="M18 21V8m-5.500 5.500L18 8l5.500 5.500" fill="none" stroke="#1a1a1a" stroke-width="2.500"/></svg></div><span>Share Screen</span></div>
    <div class="ctl c6"><div class="cic"><svg width="30" height="30" viewBox="0 0 30 30"><circle cx="15" cy="15" r="14" fill="none" stroke="#a6a6a6" stroke-width="2"/><circle cx="15" cy="15" r="10.500" fill="#a6a6a6"/></svg></div><span>Record</span></div>
    <div class="ctl c7"><div class="cic"><svg width="32" height="32" viewBox="0 0 32 32"><circle cx="14.500" cy="17" r="13.500" fill="#a6a6a6"/><circle cx="26" cy="5" r="7" fill="#1a1a1a"/><path d="M26 0v11M20.500 5.500h11" stroke="#a6a6a6" stroke-width="2"/><circle cx="10" cy="15" r="2" fill="#1a1a1a"/><circle cx="18.500" cy="15" r="2" fill="#1a1a1a"/><path d="M8 19.500q6.500 6 13 0" fill="none" stroke="#1a1a1a" stroke-width="2"/></svg></div><span>Reactions</span></div>
    <div class="ctl c8"><div class="cic"><svg width="26" height="26" viewBox="0 0 26 26" fill="none" stroke="#a6a6a6" stroke-width="2.200"><path d="M2 14V6q0-4 4-4h7M24 12v8q0 4-4 4h-7"/><circle cx="20.500" cy="5" r="3.800"/><circle cx="5.200" cy="20.800" r="3.800"/></svg></div><span>Apps</span></div>
    <button class="leave">Leave</button>
  </div>
</div>
</body>
</html>
```
FILE: styles.css
```css
* { box-sizing: border-box; }
body { margin: 0; background: #1a1a1a; font-family: "Noto Sans", "Open Sans", sans-serif; font-size: 13px; color: #4a4744; }
i, em { font-style: normal; }
svg { display: block; flex: none; }
.defs { position: absolute; width: 0; height: 0; }
.screen { width: 1920px; height: 1080px; display: flex; flex-direction: column; overflow: hidden; }
.meeting { height: 1000px; display: flex; }
.rail { width: 70px; padding: 12px; }
.shield { width: 36px; height: 36px; border-radius: 8px; background: #202020; display: flex; align-items: center; justify-content: center; }
.shield svg { width: 21px; height: 21px; }

.share { position: relative; width: 1780px; height: 1000px; display: flex; flex-direction: column; background: #f2f0ee; }
.topbar { height: 26px; display: flex; align-items: center; background: linear-gradient(#5b554e, #4b4a43 60%, #42413b); color: #dedcd6; font-size: 14.300px; padding-left: 11px; }
.activities { width: 82px; letter-spacing: .3px; line-height: 22px; margin-bottom: 2px; }
.appicon { width: 13px; height: 16px; margin-right: 6px; margin-bottom: 2px; }
.appname { width: 118px; white-space: nowrap; line-height: 22px; margin-bottom: 2px; }
.tray { margin: 0 0 2px auto; display: grid; grid-template-columns: 47px 25px 29px 22px 24px; align-items: center; }
.tri { display: block; width: 0; height: 0; border: 3.500px solid transparent; border-top: 4px solid #111; border-bottom: 0; }
.tri.light { border-width: 5px 5px 0; border-top-color: #bdbbb4; }
.tri.big { border-width: 6px 6px 0; }
.tri.dim { border-top-color: #b0b0b0; }

.desktop { height: 974px; display: flex; }
.dock { width: 62px; background: linear-gradient(#3d3835, #3d3233 5%, #463a3b 45%, #3d3533 70%, #352f2d); display: flex; flex-direction: column; }
.app { position: relative; height: 59.250px; display: flex; align-items: center; justify-content: center; }
.app svg { width: 42px; height: 42px; margin-bottom: 1px; margin-right: 1px; }
.app:nth-child(1) svg { width: 43px; height: 43px; margin-bottom: 3px; }
.app:nth-child(11) svg { margin-bottom: -2px; }
.app.current { background: linear-gradient(#605657, #605657) center / 57px 57px no-repeat; }
.on1::before, .on3::before { content: ""; position: absolute; left: 2px; top: 27px; width: 5px; height: 5px; border-radius: 50%; background: #e95420; }
.on3::before { box-shadow: 0 -8px #e95420, 0 8px #e95420; }
.grid9 { margin: 220px auto 0; padding-right: 1px; display: grid; grid-template-columns: repeat(3, 5px); gap: 6px; }
.grid9 b { width: 5px; height: 5px; border-radius: 50%; background: #f4f3f1; }

.window { width: 1718px; display: flex; flex-direction: column; }
.titlebar { height: 25px; display: flex; background: linear-gradient(#3e3b38, #474440 55%, #3c3936); color: #dedad2; }
.wintitle { width: 960px; padding-left: 763px; line-height: 24px; font-size: 13.900px; font-weight: 600; white-space: nowrap; }
.winbtns { margin-left: auto; display: grid; grid-template-columns: 60px 38px 19px 19px 20px; padding-top: 3px; }
.wb { width: 17px; height: 17px; border-radius: 50%; background: #85827b; color: #35332f; text-align: center; font: 700 15px/15px "Noto Sans", sans-serif; }
.wb.close { background: #e0532a; }
.ghost { color: #aaa69e; font-size: 13.500px; line-height: 28px; }
.burger { font-size: 17px; line-height: 26px; }
.menubar { height: 22px; display: flex; justify-content: space-between; background: #4f4d46; color: #dfdbd2; }
.menus { display: grid; grid-template-columns: 33px 36px 42px 47.500px 57.500px 44px 56px 62.500px 40px; padding-left: 6px; line-height: 23px; font-size: 13.300px; }
.closedoc { width: 33px; background: #f4f3f1; color: #444; text-align: center; line-height: 22px; font-size: 14px; }

.toolbar { height: 36px; padding: 0 0 0 2px; display: grid; align-items: center; grid-template-columns: 11px 29px 11px 28px 12px 29px 14px 5px 31px 31px 32px 7px 30px 30px 28px 14px 7px 31px 6px 28px 12px 29px 14px 6px 31px 31px 31px 7px 28px 33px 31px 5px 30px 12px 28px 12px 30px 12px 32px 6px 31px 31px 6px 32px 30px 29px 28px; }
.ic { width: 24px; height: 24px; padding: 1px; }
.sep { width: 1px; height: 26px; background: #d8d6d3; }
.grip { display: block; }
.grip.v { width: 3px; height: 22px; background: repeating-linear-gradient(#b9b7b4 0 2px, transparent 2px 3.500px); }
.grip.h { width: 29px; height: 3px; margin: 3px 0 3px 7px; background: repeating-linear-gradient(90deg, #b9b7b4 0 2px, transparent 2px 3.500px); }
.btn { width: 28px; height: 31px; border: 1px solid #aaa7a3; border-radius: 5px; background: #f8f7f6; display: flex; align-items: center; justify-content: center; }

.work { height: 834px; display: flex; }
.drawbar { width: 44px; display: grid; align-content: start; align-items: center; grid-template-rows: 9px 36px 4px 35px 35px 4px 35px 32px 32px 8px 31px 32px 34px 6px 34px 32px 32px 33px 32px 33px 32px; }
.one { padding-left: 9px; }
.two { padding-left: 4px; display: flex; align-items: center; gap: 5px; }
.rule { height: 1px; width: 22px; margin-left: 11px; background: #d4d2cf; }

.pages { width: 181px; border-top: 1px solid #b2b0ae; display: flex; flex-direction: column; padding-left: 2px; }
.phead { height: 32px; width: 174px; display: flex; align-items: center; justify-content: space-between; padding: 1px 1px 0 2px; font-weight: 600; font-size: 13.400px; }
.plist { width: 174px; height: 800px; border: 1px solid #b2b0ae; border-width: 1px 0 0 1px; background: #fdfdfd; display: flex; justify-content: space-between; }
.thumbs { width: 160px; }
.slot { width: 151px; height: 181px; margin: 0 0 10px 8px; padding-top: 4px; display: flex; }
.slot span { width: 23px; text-align: right; padding-right: 5px; font-size: 13px; font-weight: 600; line-height: 12px; color: #6f6d6b; }
.thumb { width: 125px; height: 174px; background: #fefefe; border: 1px solid #777; box-shadow: 1px 1px 2px #999; fill: #222; }
.slot.first { height: 27px; padding: 0; margin-bottom: 10px; }
.slot.first .thumb { height: 24px; border-top: 0; }
.slot.sel { background: linear-gradient(#cf9f8e, #e8b7a7); box-shadow: inset 0 0 0 1px #a87667; }
.slot.sel span { color: #5b4a45; }
.pscroll { width: 7px; margin-top: 136px; background: #f0926e; }

.splitter { display: flex; align-items: flex-start; padding-top: 383px; border: 1px solid #b2b0ae; border-bottom-color: #cfcdcb; }
.splitter svg { width: 100%; height: 68px; background: #96918d; fill: #fff; }
.splitter.left { width: 7px; }
.splitter.right { width: 6px; }

.editor { width: 1106px; display: flex; flex-direction: column; }
.canvas { flex: none; height: 812px; display: flex; justify-content: space-between; padding: 12px 0 0 46px; }
.sheet { width: 553px; height: 782px; background: #fefefe; border: 1px solid #929292; box-shadow: 1px 2px 5px #8a8a8a; padding: 26px 25px; }
.margins { position: relative; width: 501px; height: 729px; border: 1px solid #c4c4c4; }
.frame { position: absolute; left: 69px; top: 72px; width: 283px; height: 592px; border: 5px solid #fadbd3; border-width: 6px 5px; }
.frame pre { margin: 1px 0 0; font: 16.690px/18.670px "Liberation Sans", Arial, sans-serif; color: #0c0c0c; }
.caret { display: inline-block; width: 1px; height: 18px; margin-bottom: -4px; background: #111; vertical-align: 0; }
.ibeam { position: absolute; left: 224px; top: 533px; width: 9px; height: 16px; }
.vscroll { width: 7px; height: 420px; margin: 187px 1px 0 0; background: #f0926e; }
.hscroll { flex: none; height: 8px; border-bottom: 1px solid #8e8c8a; background: linear-gradient(#f0926e, #f0926e) 338px 0 / 727px 7px no-repeat; }
.tabs { flex: none; height: 17px; display: flex; padding-left: 10px; font-size: 10.800px; line-height: 15px; text-align: center; }
.navs { width: 64px; height: 14px; margin: 1px 14px 0 0; }
.tab { width: 68px; height: 16px; border: 1px solid #9a9896; border-width: 0 1px 1px 0; white-space: nowrap; }
.tab.active { width: 58px; background: #fff; border-left-width: 1px; font-weight: 700; }
.tab.t3 { width: 108px; }

.sidebar { width: 374px; border-top: 1px solid #b2b0ae; border-bottom: 1px solid #cfcdcb; display: flex; padding: 3px 0 0 4px; }
.props { width: 333px; height: 829px; border: 1px solid #dddbd9; display: flex; flex-direction: column; }
.ptitle { height: 25px; display: flex; align-items: center; justify-content: space-between; padding: 0 4px 0 9px; font-size: 13.900px; font-weight: 600; }
.ptitle svg { margin-top: 3px; }
.phd { height: 26px; display: grid; align-items: center; grid-template-columns: 12px 300px 10px; padding: 0 0 1px 4px; background: linear-gradient(#e3e1df, #f2f0ee); font-weight: 600; font-size: 13.600px; }
.fonts { display: flex; gap: 7px; padding: 6px 0 0 6px; }
.combo { height: 26px; border: 1px solid #a9a6a3; border-radius: 4px; background: #fff; display: flex; overflow: hidden; }
.combo span { flex: 1; padding-left: 6px; line-height: 24px; font-size: 13px; }
.combo b { width: 26px; display: flex; align-items: center; justify-content: center; background: #f4f3f2; border-left: 1px solid #c2c0bd; }
.f1 { width: 247px; }
.f2 { width: 65px; }
.g { display: grid; align-items: center; }
.g svg, .spins svg { width: 16px; height: 16px; }
.ga { font: 700 18px/18px "DejaVu Serif", serif; letter-spacing: -1.500px; color: #4b4d4f; width: 16px; white-space: nowrap; display: block; height: 20px; }
.ga sup, .ga sub { font: 700 10px/8px "DejaVu Sans", sans-serif; }
.or { color: #dd7a2a; }
.bl { color: #2f5fa8; }
.it { font-style: italic; }
.un { text-decoration: underline; }
.st { text-decoration: line-through; }
.sh { text-shadow: 1px 1px #aaa; }
.fc { color: #3a6cb0; line-height: 14px; height: 17px; border-bottom: 3px solid #d8141c; padding-left: 2px; }
.chars { height: 56px; padding-left: 9px; grid-template-columns: 23px 23px 20px 15px 24px 168px 24px 20px; }
.colors { height: 27px; padding-left: 8px; margin-bottom: 8px; grid-template-columns: 23px 20px 23px 163px 22px 22px 24px 20px; }
.aligns { height: 42px; padding: 0 0 0 5px; grid-template-columns: 26px 23px 23px 179px 27px 23px 20px; margin-bottom: 4px; margin-top: -1px; }
.sbtn { width: 22px; height: 24px; border: 1px solid #a5a29f; border-radius: 4px; background: #f8f8f7; display: flex; align-items: center; justify-content: center; }
.lists { height: 26px; padding-left: 7px; grid-template-columns: 23px 12px 22px 171px 23px 23px 23px 16px; margin-top: -2px; }
.arw { fill: none; stroke: #9b9b99; }
.hr { height: 1px; margin: 7px 5px 0; background: #8f8d8b; }
.labels { display: grid; grid-template-columns: 163px 100px; padding-left: 5px; height: 27px; line-height: 27px; font-size: 13px; }
.sicons { height: 27px; padding-left: 7px; grid-template-columns: 24px 140px 23px 24px 20px; }
.spins { display: grid; grid-template-columns: 23px 140px 23px 127px; grid-auto-rows: 36px; align-items: center; padding: 6px 0 0 7px; }
.spin { width: 126px; height: 29px; border: 1px solid #aaa7a5; border-top-color: #8a8886; border-radius: 4px; display: grid; grid-template-columns: 72px 27px 26px; line-height: 27px; font-size: 13px; }
.spin b { font: 400 20px/26px "Noto Sans", sans-serif; text-align: center; color: #333; }
.spin b:last-child { border-left: 1px solid #b5b2b0; }
.ls { padding-left: 1px; }
.decks { width: 37px; display: flex; flex-direction: column; align-items: center; padding-top: 11px; }
.decks svg { width: 22px; height: 22px; margin-bottom: 10px; }
.decks svg.m { width: 9px; height: 9px; margin-bottom: 16px; }
.deckon { width: 29px; height: 30px; border: 1px solid #b0adab; border-radius: 3px; display: flex; align-items: center; justify-content: center; margin-bottom: 7px; }
.decks .deckon svg { margin: 0; }

.findbar { height: 38px; padding-top: 2px; display: grid; align-items: center; grid-template-columns: 15px 25px 235px 31px 27px 48px 18px 79px 8px 30px 2px; padding-left: 3px; }
.fx { width: 16px; height: 16px; }
.find { width: 227px; height: 25px; }
.find span { color: #8b8987; font-size: 14px; line-height: 22px; padding-left: 5px; }
.fa { width: 18px; height: 18px; fill: #efefef; stroke: #d0d0d0; }
.fall { color: #9b9997; font-size: 11.200px; line-height: 18px; margin-bottom: 2px; }
.check { width: 12px; height: 14px; border: 1px solid #a9a6a3; border-radius: 3px; background: #fff; }
.mc { font-size: 13.400px; white-space: nowrap; }
.fr { width: 22px; height: 22px; margin-left: -1px; }
.status { height: 19px; border-top: 2px solid #d5d3d0; display: grid; grid-template-columns: 115px 614px 368px 191px 192px 20px 27px 21px 132px 38px; font-size: 11.300px; line-height: 16px; white-space: nowrap; }
.status span { display: flex; align-items: center; border-right: 1px solid #8f8d8b; padding-left: 8px; gap: 2px; height: 16px; margin-top: 1px; }
.status .s1 { padding-left: 9px; font-size: 11.100px; }
.status .s4 { border: 0; padding-left: 10px; gap: 4px; }
.status .s6, .status .s8 { padding-left: 5px; }
.status .s9 { padding-left: 8px; }
.status .s10 { border: 0; padding-left: 7px; }

.recording { position: absolute; left: -1px; top: 18px; height: 24px; display: flex; align-items: center; gap: 13px; color: #f0efec; font-size: 16px; }
.recording i { width: 17px; height: 17px; border-radius: 50%; background: radial-gradient(circle at 50% 30%, #ffc0b4, #ff5a45 60%, #e83c28); box-shadow: 0 0 6px 2px #d9402a; }
.banner { position: absolute; left: 626px; top: 0; height: 33px; display: flex; border-radius: 0 0 5px 5px; overflow: hidden; font-weight: 600; font-size: 17.900px; line-height: 33px; white-space: nowrap; }
.viewing { width: 332px; background: #23d959; color: #2c4a38; text-align: center; }
.opts { width: 183px; background: #202224; color: #f4f4f4; display: flex; align-items: center; padding-left: 43px; gap: 7px; font-size: 16.900px; }
.opts span { width: 108px; }
.viewbtn { position: absolute; left: 1755px; top: 7px; width: 83px; height: 39px; border-radius: 9px; background: rgba(34, 34, 34, .35); display: flex; align-items: center; gap: 8px; padding-left: 10px; color: #fff; font-size: 16px; }

.controls { height: 80px; display: flex; padding-left: 19px; color: #b4b4b4; font-size: 17.300px; }
.ctl { display: flex; flex-direction: column; align-items: center; width: 100px; white-space: nowrap; }
.cic { height: 50px; padding-top: 2px; display: flex; align-items: center; justify-content: center; gap: 8px; }
.ctl > span { line-height: 24px; }
.up { margin-top: 22px; margin-left: -8px; }
.c2 { margin-left: 35px; }
.c2 + .up { margin-left: 0; }
.c3 { margin-left: 392px; }
.c3 + .up { margin-left: 24px; }
.c3 .cic em { font-size: 16.500px; line-height: 20px; margin-top: -3px; }
.c3 .cic { margin-left: 27px; }
.c4 { margin-left: 22px; }
.c5 { margin-left: 33px; }
.c5 > span { color: #23d959; }
.c6 { margin-left: 34px; }
.c7 { margin-left: 20px; }
.c8 { margin-left: 20px; }
.leave { margin: 19px 18px 0 auto; width: 92px; height: 41px; border: 0; border-radius: 9px; background: #b82424; color: #fff; font: 700 17px "Noto Sans", sans-serif; }
```
